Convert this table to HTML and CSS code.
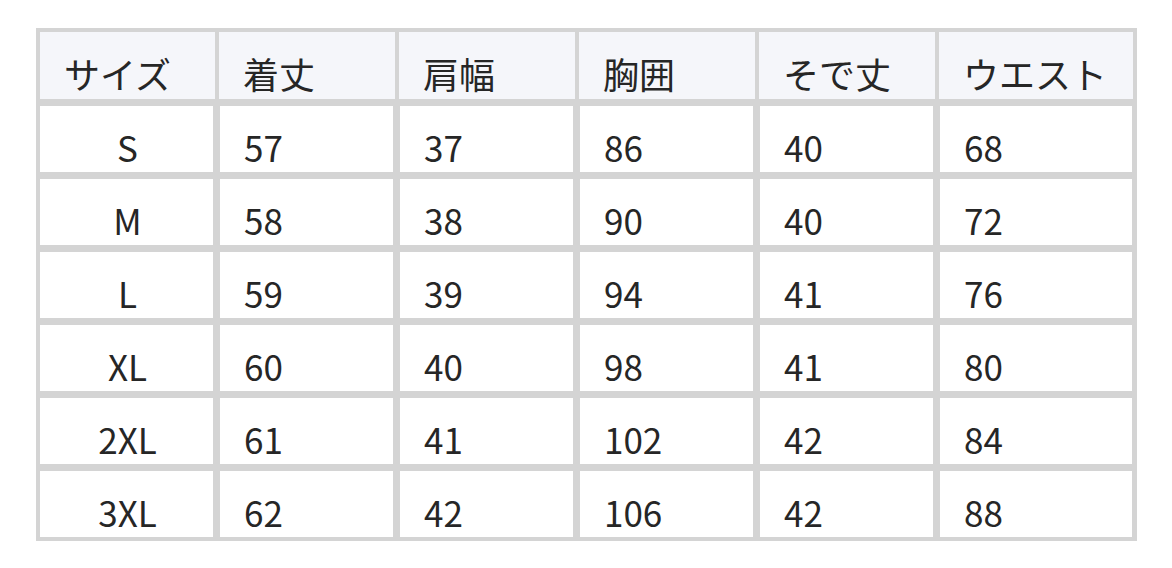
FILE: index.html
```html
<!DOCTYPE html>
<html lang="ja">
<head>
<meta charset="utf-8">
<title>サイズ表</title>
<link rel="stylesheet" href="styles.css">
</head>
<body>
<div class="sheet" role="table">
  <div class="row head" role="row">
    <div class="cell c1" role="columnheader">サイズ</div>
    <div class="cell" role="columnheader">着丈</div>
    <div class="cell" role="columnheader">肩幅</div>
    <div class="cell" role="columnheader">胸囲</div>
    <div class="cell" role="columnheader">そで丈</div>
    <div class="cell last" role="columnheader">ウエスト</div>
  </div>
  <div class="row body" role="row">
    <div class="cell c1" role="cell">S</div><div class="cell" role="cell">57</div><div class="cell" role="cell">37</div><div class="cell" role="cell">86</div><div class="cell" role="cell">40</div><div class="cell last" role="cell">68</div>
  </div>
  <div class="row body" role="row">
    <div class="cell c1" role="cell">M</div><div class="cell" role="cell">58</div><div class="cell" role="cell">38</div><div class="cell" role="cell">90</div><div class="cell" role="cell">40</div><div class="cell last" role="cell">72</div>
  </div>
  <div class="row body" role="row">
    <div class="cell c1" role="cell">L</div><div class="cell" role="cell">59</div><div class="cell" role="cell">39</div><div class="cell" role="cell">94</div><div class="cell" role="cell">41</div><div class="cell last" role="cell">76</div>
  </div>
  <div class="row body" role="row">
    <div class="cell c1" role="cell">XL</div><div class="cell" role="cell">60</div><div class="cell" role="cell">40</div><div class="cell" role="cell">98</div><div class="cell" role="cell">41</div><div class="cell last" role="cell">80</div>
  </div>
  <div class="row body" role="row">
    <div class="cell c1" role="cell">2XL</div><div class="cell" role="cell">61</div><div class="cell" role="cell">41</div><div class="cell" role="cell">102</div><div class="cell" role="cell">42</div><div class="cell last" role="cell">84</div>
  </div>
  <div class="row body" role="row">
    <div class="cell c1" role="cell">3XL</div><div class="cell" role="cell">62</div><div class="cell" role="cell">42</div><div class="cell" role="cell">106</div><div class="cell" role="cell">42</div><div class="cell last" role="cell">88</div>
  </div>
</div>
</body>
</html>
```
FILE: styles.css
```css
html, body {
  margin: 0;
  padding: 0;
  background: #ffffff;
}
body {
  font-family: "Noto Sans CJK JP", "Noto Sans", sans-serif;
  color: #262626;
}
.sheet {
  margin: 28px 0 0 36px;
  width: 1101px;
  box-sizing: border-box;
  border: 4px solid #d4d4d4;
}
.row {
  display: flex;
}
.cell {
  box-sizing: border-box;
  width: 180px;
  flex: none;
  border-right: 4px solid #d4d4d4;
  font-size: 35px;
  line-height: 36px;
  padding-left: 25px;
  white-space: nowrap;
}
.cell.c1 {
  width: 179px;
}
.cell.last {
  width: 194px;
  border-right: none;
}
.head .cell {
  height: 67px;
  padding-top: 23px;
  padding-left: 24px;
  font-size: 36px;
  background: #f5f6fa;
}
.body {
  border-top: 7px solid #d4d4d4;
}
.body .cell {
  height: 66px;
  padding-top: 23px;
  background: #ffffff;
  box-shadow: inset 1px 0 0 #d4d4d4, inset -2px 0 0 #d4d4d4;
}
.body .cell.c1 {
  text-align: center;
  padding-left: 0;
  box-shadow: inset -2px 0 0 #d4d4d4;
}
.body .cell.last {
  box-shadow: inset 1px 0 0 #d4d4d4, inset -1px 0 0 #d4d4d4;
}
```
